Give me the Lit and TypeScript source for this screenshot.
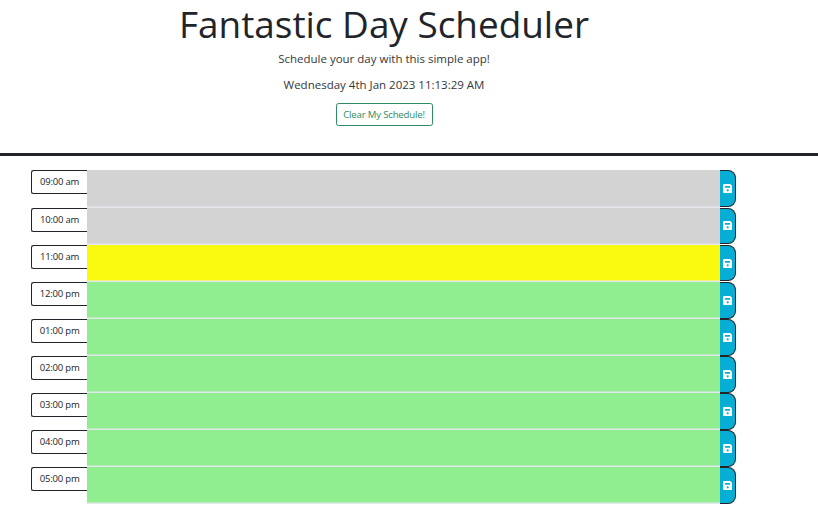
import { LitElement, html, css } from "lit";
import { customElement, property } from "lit/decorators.js";

@customElement("time-block")
class TimeBlock extends LitElement {
  @property() label = "";
  @property() phase = "future";

  static styles = css`
    :host { display: flex; height: 37.12px; align-items: flex-start; }
    .hour {
      box-sizing: border-box; width: 55.5px; height: 24px; flex: none;
      border: 1px solid #212529; border-right: 0; border-radius: 2.5px 0 0 2.5px;
      background: #fff; color: #212529; text-align: center;
      font-size: 9.5px; letter-spacing: -0.2px; line-height: 22px; white-space: nowrap;
    }
    .entry {
      box-sizing: border-box; flex: 1; height: 37.12px; border: 0 solid #e4e8ee;
      border-bottom-width: 1px; padding: 4px 8px;
      outline: none; resize: none; margin: 0; font: inherit;
      box-shadow: inset 0 -0.6px 0 #e4e8ee;
    }
    .past { background: #d3d3d3; }
    .present { background: #f9f910; }
    .future { background: #90ee90; }
    .save {
      box-sizing: border-box; width: 16.5px; height: 36.8px; flex: none; padding: 0 1px 0 0;
      display: flex; align-items: center; justify-content: center;
      background: #06aed5; border: 1px solid #212529; border-left: 0;
      border-radius: 0 8px 8px 0;
    }
    svg { display: block; width: 9.5px; height: 9px; flex: none; margin-left: 1px; }
  `;

  render() {
    return html`
      <div class="hour">${this.label}</div>
      <textarea class="entry ${this.phase}"></textarea>
      <button class="save" aria-label="Save">
        <svg viewBox="0 0 9.5 9">
          <path fill="#fff" fill-rule="evenodd" d="M1 0H7.2L9.5 2.2V8Q9.5 9 8.5 9H1Q0 9 0 8V1Q0 0 1 0ZM2 2V3.7H7V2ZM4.7 5.2A1.1 1.1 0 1 0 4.7 7.4A1.1 1.1 0 1 0 4.7 5.2Z"/>
        </svg>
      </button>
    `;
  }
}

@customElement("app-root")
class AppRoot extends LitElement {
  static styles = css`
    :host {
      display: block; height: 518px; background: #fff;
      color: #212529; font-family: "Open Sans", "Noto Sans", sans-serif;
    }
    header {
      box-sizing: border-box; height: 156px; padding-right: 50px;
      border-bottom: 3px solid #212529;
      display: flex; flex-direction: column; align-items: center;
    }
    h1 {
      margin: 0; font-size: 36.9px; font-weight: 400;
      line-height: 48px; white-space: nowrap;
    }
    p { margin: 1px 0 0; font-size: 11.5px; line-height: 20px; white-space: nowrap; color: #33373b; }
    .date { margin-top: 6px; }
    .clear {
      box-sizing: border-box; margin-top: 8px; width: 97px; height: 23px; padding: 0;
      border: 1px solid #2e8b62; border-radius: 2.5px; background: #fff; color: #2e8b62;
      font: 9.6px/20px "Open Sans", "Noto Sans", sans-serif; letter-spacing: -0.18px; white-space: nowrap;
    }
    main { width: 705px; margin: 14.45px 0 0 31.4px; }
  `;

  private hours = [
    ["09:00 am", "past"], ["10:00 am", "past"], ["11:00 am", "present"],
    ["12:00 pm", "future"], ["01:00 pm", "future"], ["02:00 pm", "future"],
    ["03:00 pm", "future"], ["04:00 pm", "future"], ["05:00 pm", "future"],
  ];

  render() {
    return html`
      <header>
        <h1>Fantastic Day Scheduler</h1>
        <p>Schedule your day with this simple app!</p>
        <p class="date">Wednesday 4th Jan 2023 11:13:29 AM</p>
        <button class="clear">Clear My Schedule!</button>
      </header>
      <main>
        ${this.hours.map(([label, phase]) => html`<time-block .label=${label} .phase=${phase}></time-block>`)}
      </main>
    `;
  }
}
